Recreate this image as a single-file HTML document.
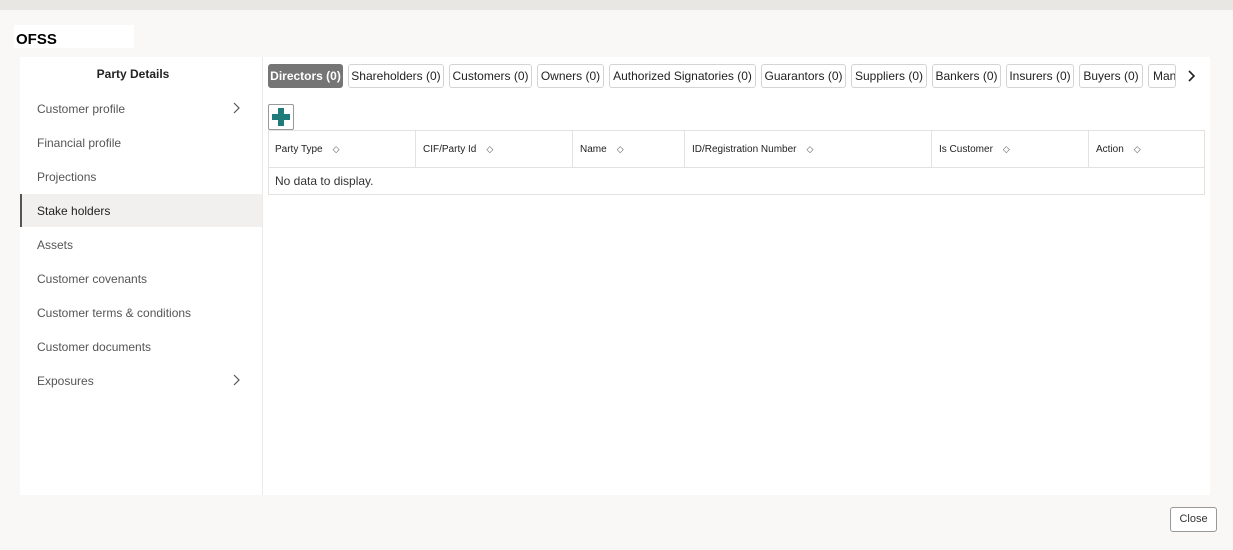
<!DOCTYPE html>
<html><head><meta charset="utf-8"><style>
*{box-sizing:border-box;margin:0;padding:0}
body{width:1233px;height:550px;background:#f9f8f6;font-family:"Liberation Sans",sans-serif;position:relative;overflow:hidden;color:#333}
.a{position:absolute}
.top{left:0;top:0;width:1233px;height:10px;background:#e9e7e4}
.logo{left:14px;top:25px;width:120px;height:23px;background:#fff;font-weight:bold;font-size:15px;color:#000;padding:6px 0 0 2px;line-height:17px}
.left{left:20px;top:57px;width:242px;height:438px;background:#fff}
.right{left:262px;top:57px;width:948px;height:438px;background:#fff;border-left:1px solid #eceae7}
.ttl{left:20px;top:67px;width:226px;text-align:center;font-size:12px;font-weight:bold;color:#222}
.mi{left:37px;font-size:12px;color:#555}
.sel{left:20px;top:194px;width:242px;height:33px;background:#f1f0ee;border-left:2px solid #555}
.tab{top:64px;height:24px;border:1px solid #d6d4d1;border-radius:3px;font-size:12px;color:#222;line-height:22px;text-align:center;background:#fff;white-space:nowrap;overflow:hidden}
.tab.on{background:#757575;color:#fff;border-color:#757575;font-weight:bold}
.plus{left:268px;top:104px;width:26px;height:26px;border:1px solid #999;border-radius:2px;background:#fff}
.tbl{left:268px;top:130px;width:937px;height:65px;border:1px solid #e4e2df}
.hd{top:130px;height:38px;font-size:10px;color:#222;line-height:38px;padding-left:7px;border-left:1px solid #e4e2df}
.hd span{margin-left:10px;font-size:9px;color:#555}
.close{left:1170px;top:507px;width:47px;height:25px;border:1px solid #999;border-radius:3px;background:#fff;font-size:11px;color:#333;text-align:center;line-height:23px}
</style></head><body>
<div class="a top"></div>
<div class="a logo">OFSS</div>
<div class="a left"></div>
<div class="a right"></div>
<div class="a ttl">Party Details</div>
<div class="a sel"></div>
<div class="a mi" style="top:102px">Customer profile</div>
<svg class="a" style="left:232px;top:102px" width="8" height="12" viewBox="0 0 8 12"><path d="M2 1l5 5-5 5" fill="none" stroke="#555" stroke-width="1.2"/></svg>
<div class="a mi" style="top:136px">Financial profile</div>
<div class="a mi" style="top:170px">Projections</div>
<div class="a mi" style="top:204px;color:#222">Stake holders</div>
<div class="a mi" style="top:238px">Assets</div>
<div class="a mi" style="top:272px">Customer covenants</div>
<div class="a mi" style="top:306px">Customer terms &amp; conditions</div>
<div class="a mi" style="top:340px">Customer documents</div>
<div class="a mi" style="top:374px">Exposures</div>
<svg class="a" style="left:232px;top:374px" width="8" height="12" viewBox="0 0 8 12"><path d="M2 1l5 5-5 5" fill="none" stroke="#555" stroke-width="1.2"/></svg>

<div class="a tab on" style="left:268px;width:75px">Directors (0)</div>
<div class="a tab" style="left:348px;width:96px">Shareholders (0)</div>
<div class="a tab" style="left:449px;width:83px">Customers (0)</div>
<div class="a tab" style="left:537px;width:67px">Owners (0)</div>
<div class="a tab" style="left:609px;width:147px">Authorized Signatories (0)</div>
<div class="a tab" style="left:761px;width:85px">Guarantors (0)</div>
<div class="a tab" style="left:851px;width:76px">Suppliers (0)</div>
<div class="a tab" style="left:932px;width:69px">Bankers (0)</div>
<div class="a tab" style="left:1006px;width:68px">Insurers (0)</div>
<div class="a tab" style="left:1079px;width:64px">Buyers (0)</div>
<div class="a tab" style="left:1148px;width:28px;text-align:left;padding-left:4px">Man</div>
<svg class="a" style="left:1187px;top:70px" width="8" height="12" viewBox="0 0 8 12"><path d="M2 1l5 5-5 5" fill="none" stroke="#222" stroke-width="1.6"/></svg>

<div class="a plus"><svg width="24" height="24" viewBox="0 0 24 24"><path d="M12 3v18M3 12h18" stroke="#1f7a7a" stroke-width="6" fill="none"/></svg></div>
<div class="a tbl"></div>
<div class="a" style="left:268px;top:167px;width:937px;height:1px;background:#e4e2df"></div>
<div class="a hd" style="left:268px;border-left:none">Party Type<span>◇</span></div>
<div class="a hd" style="left:415px">CIF/Party Id<span>◇</span></div>
<div class="a hd" style="left:572px">Name<span>◇</span></div>
<div class="a hd" style="left:684px">ID/Registration Number<span>◇</span></div>
<div class="a hd" style="left:931px">Is Customer<span>◇</span></div>
<div class="a hd" style="left:1088px">Action<span>◇</span></div>
<div class="a" style="left:275px;top:174px;font-size:12px;color:#333">No data to display.</div>
<div class="a close">Close</div>
</body></html>
